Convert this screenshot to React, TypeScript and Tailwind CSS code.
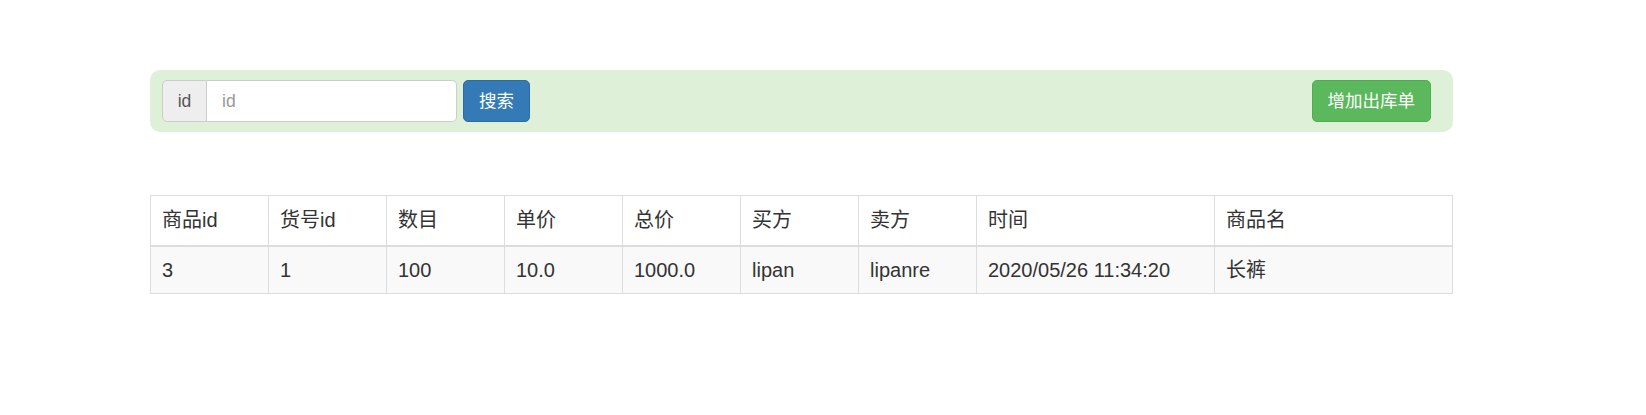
import React from "react";

const headers: string[] = ["商品id", "货号id", "数目", "单价", "总价", "买方", "卖方", "时间", "商品名"];
const widths: string[] = ["w-[118px]", "w-[118px]", "w-[118px]", "w-[118px]", "w-[118px]", "w-[118px]", "w-[118px]", "w-[238px]", "w-[238px]"];
const rows: string[][] = [["3", "1", "100", "10.0", "1000.0", "lipan", "lipanre", "2020/05/26 11:34:20", "长裤"]];

const App: React.FC = () => {
  return (
    <div
      className="min-h-[415px] w-full bg-white text-[#333] text-[17.5px] leading-[25px]"
      style={{ fontFamily: '"Liberation Sans", Arial, "Noto Sans CJK SC", sans-serif' }}
    >
      <div className="ml-[150px] w-[1303px] pt-[70px]">
        {/* search well */}
        <div className="flex items-center justify-between rounded-[10px] bg-[#dff0d8] pl-[12px] pr-[22px] py-[10px]">
          <div className="flex items-center gap-[6px]">
            <div className="flex h-[42px]">
              <span className="flex w-[45px] items-center justify-center rounded-l-[5px] border border-[#ccc] bg-[#eee] text-[#555]">
                id
              </span>
              <input
                className="h-[42px] w-[250px] rounded-r-[5px] border border-l-0 border-[#ccc] bg-white px-[15px] text-[#555] outline-none placeholder:text-[#999]"
                placeholder="id"
              />
            </div>
            <button className="h-[42px] rounded-[5px] border border-[#2e6da4] bg-[#337ab7] px-[15px] text-white">
              搜索
            </button>
          </div>
          <button className="h-[42px] rounded-[5px] border border-[#4cae4c] bg-[#5cb85c] px-[15px] text-white">
            增加出库单
          </button>
        </div>

        {/* table */}
        <table className="mt-[63px] w-[1303px] table-fixed border-collapse border border-[#ddd] text-[20px] leading-[28px]">
          <thead>
            <tr>
              {headers.map((h, i) => (
                <th
                  key={h}
                  className={`${widths[i]} h-[50px] border border-b-2 border-[#ddd] px-[11px] text-left align-middle font-normal`}
                >
                  {h}
                </th>
              ))}
            </tr>
          </thead>
          <tbody>
            {rows.map((r, ri) => (
              <tr key={ri} className="bg-[#f9f9f9]">
                {r.map((c, ci) => (
                  <td key={ci} className="h-[48px] border border-[#ddd] px-[11px] align-middle">
                    {c}
                  </td>
                ))}
              </tr>
            ))}
          </tbody>
        </table>
      </div>
    </div>
  );
};

export default App;
